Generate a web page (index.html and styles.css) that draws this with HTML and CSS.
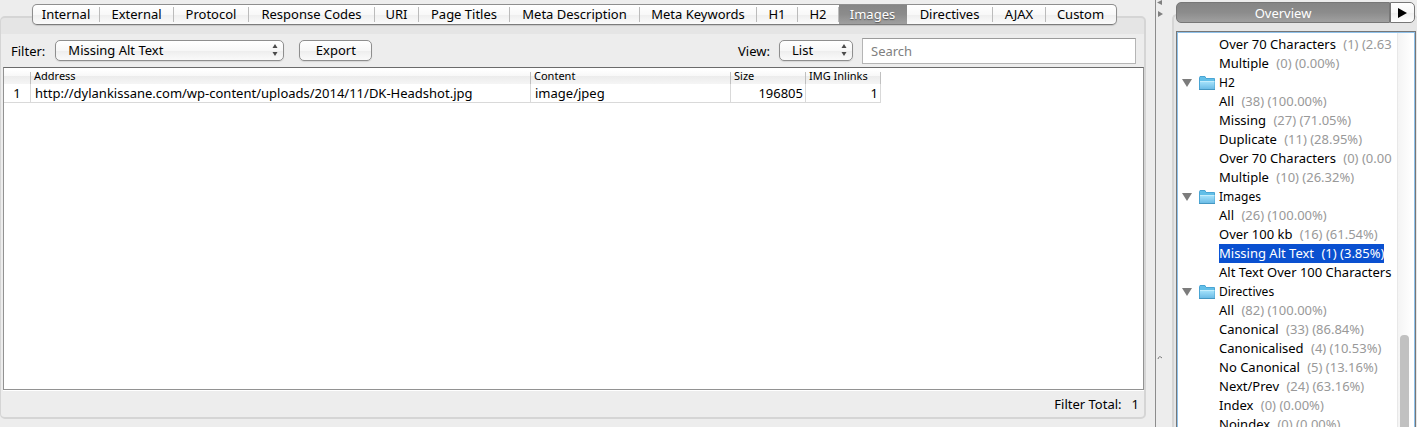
FILE: index.html
```html
<!DOCTYPE html>
<html lang="en">
  <head>
    <meta charset="UTF-8" />
    <meta name="viewport" content="width=device-width, initial-scale=1" />
    <title>Images</title>
    <link rel="stylesheet" href="styles.css">
  </head>
  <body>
    <svg class="sprite" width="0" height="0">
      <linearGradient id="folder-fill" x1="0" y1="0" x2="0" y2="1">
        <stop offset="0" stop-color="#a5e2fb" />
        <stop offset="1" stop-color="#6cbce6" />
      </linearGradient>
      <symbol id="folder" viewBox="0 0 16 14">
        <path d="M.5 13V1.5L1 .5h5l1 2h8.500V13z" fill="#62bfe8" stroke="#4aa5d4" />
        <path d="M1 5.500h14.500V13H1z" fill="url(#folder-fill)" />
        <path d="M1 5.500h14.500" stroke="#c4edfc" />
        <path d="M0 13.500h16" stroke="#4597c2" />
      </symbol>
      <symbol id="arrows" viewBox="0 0 6 12">
        <path d="M3 0l2.500 4h-5zM3 12l2.500-4h-5z" fill="#4a4a4a" />
      </symbol>
    </svg>

    <main class="main">
      <nav class="tabs">
        <button>Internal</button>
        <button>External</button>
        <button>Protocol</button>
        <button>Response Codes</button>
        <button>URI</button>
        <button>Page Titles</button>
        <button>Meta Description</button>
        <button>Meta Keywords</button>
        <button>H1</button>
        <button>H2</button>
        <button class="active">Images</button>
        <button>Directives</button>
        <button>AJAX</button>
        <button>Custom</button>
      </nav>
      <section class="panel">
        <div class="toolbar">
          <label for="filter">Filter:</label>
          <div class="select filter-select">
            <select id="filter">
              <option>Missing Alt Text</option>
              <option>Over 100 kb</option>
              <option>All</option>
            </select>
            <svg width="6" height="12"><use href="#arrows" /></svg>
          </div>
          <button class="export-btn">Export</button>
          <label class="view-label" for="view">View:</label>
          <div class="select view-select">
            <select id="view">
              <option>List</option>
              <option>Tree</option>
            </select>
            <svg width="6" height="12"><use href="#arrows" /></svg>
          </div>
          <input class="search" type="text" placeholder="Search" aria-label="Search" />
        </div>
        <div class="results">
          <table>
            <colgroup>
              <col class="col-row" />
              <col class="col-address" />
              <col class="col-content" />
              <col class="col-number" />
              <col class="col-number" />
            </colgroup>
            <thead>
              <tr>
                <th></th>
                <th>Address</th>
                <th>Content</th>
                <th>Size</th>
                <th>IMG Inlinks</th>
              </tr>
            </thead>
            <tbody>
              <tr>
                <td class="row-number">1</td>
                <td>http://dylankissane.com/wp-content/uploads/2014/11/DK-Headshot.jpg</td>
                <td>image/jpeg</td>
                <td class="number">196805</td>
                <td class="number">1</td>
              </tr>
            </tbody>
          </table>
        </div>
        <div class="total"><span>Filter Total:</span><span>1</span></div>
      </section>
    </main>

    <div class="splitter">
      <svg width="6" height="18" viewBox="0 0 6 18">
        <path d="M5 0v5L0 2.500zM1 11v6l5-3z" fill="#808080" />
      </svg>
      <svg class="grip" width="6" height="6" viewBox="0 0 6 6">
        <path d="M1 4q1-4 4-1" fill="none" stroke="#777" />
      </svg>
    </div>

    <aside class="side">
      <div class="side-tabs">
        <button class="overview">Overview</button>
        <button class="next" aria-label="Next tab">
          <svg width="10" height="10" viewBox="0 0 10 10"><path d="M0 0l9 5-9 5z" /></svg>
        </button>
      </div>
      <div class="side-panel">
        <div class="tree">
          <ul>
            <li>Over 70 Characters <span>(1) (2.63</span></li>
            <li>Multiple <span>(0) (0.00%)</span></li>
            <li class="folder"><i></i><svg width="16" height="14"><use href="#folder" /></svg>H2</li>
            <li>All <span>(38) (100.00%)</span></li>
            <li>Missing <span>(27) (71.05%)</span></li>
            <li>Duplicate <span>(11) (28.95%)</span></li>
            <li>Over 70 Characters <span>(0) (0.00</span></li>
            <li>Multiple <span>(10) (26.32%)</span></li>
            <li class="folder"><i></i><svg width="16" height="14"><use href="#folder" /></svg>Images</li>
            <li>All <span>(26) (100.00%)</span></li>
            <li>Over 100 kb <span>(16) (61.54%)</span></li>
            <li class="selected"><b>Missing Alt Text <span>(1) (3.85%)</span></b></li>
            <li>Alt Text Over 100 Characters</li>
            <li class="folder"><i></i><svg width="16" height="14"><use href="#folder" /></svg>Directives</li>
            <li>All <span>(82) (100.00%)</span></li>
            <li>Canonical <span>(33) (86.84%)</span></li>
            <li>Canonicalised <span>(4) (10.53%)</span></li>
            <li>No Canonical <span>(5) (13.16%)</span></li>
            <li>Next/Prev <span>(24) (63.16%)</span></li>
            <li>Index <span>(0) (0.00%)</span></li>
            <li>Noindex <span>(0) (0.00%)</span></li>
          </ul>
          <div class="scrollbar"><div class="thumb"></div></div>
        </div>
      </div>
    </aside>
  </body>
</html>
```
FILE: styles.css
```css
/* Base */
* {
  box-sizing: border-box;
}
body {
  margin: 0;
  height: 100vh;
  display: flex;
  overflow: hidden;
  background-color: #ededed;
  color: #000;
  font-family: "Lucida Grande", "Noto Sans", sans-serif;
  font-size: 13px;
}
button,
select,
input {
  font: inherit;
  color: inherit;
  margin: 0;
  padding: 0;
}
.sprite {
  position: absolute;
}

/* Main area */
.main {
  flex: 1;
  min-width: 0;
  display: flex;
  flex-direction: column;
  padding: 4px 9px 8px 0;
}

/* Tabs */
.tabs {
  align-self: center;
  display: grid;
  grid-template-columns: 67px 74px 75px 126px 44px 91px 130px 117px 41px 41px 68px 86px 53px 70px;
  height: 21px;
  margin-left: 2px;
  border: 1px solid #8e8e8e;
  border-bottom-color: #7c7c7c;
  border-radius: 5px;
  background: linear-gradient(#fff, #f8f8f8 50%, #eee 51%, #fbfbfb);
  box-shadow: 0 1px 1px #c8c8c8;
  z-index: 1;
}
.tabs button {
  height: 19px;
  line-height: 19px;
  border: none;
  background: linear-gradient(#bbb, #bbb) right center / 1px 15px no-repeat;
  white-space: nowrap;
}
.tabs button:last-child {
  background: none;
}
.tabs .active {
  background: linear-gradient(#858585, #8c8c8c 50%, #a0a0a0);
  color: #fff;
  text-shadow: 0 1px 1px #555;
}

/* Panel */
.panel {
  flex: 1;
  min-height: 0;
  display: flex;
  flex-direction: column;
  margin-top: -9px;
  padding: 16px 0 0 2px;
  border: 2px solid #d5d5d5;
  border-left-width: 1px;
  border-radius: 5px;
  background: linear-gradient(#e5e5e5 16px, #ededed 16px);
}
.toolbar {
  display: flex;
  align-items: center;
  height: 33px;
  padding: 0 8px;
}
.select {
  position: relative;
  height: 21px;
}
.select select {
  width: 100%;
  height: 21px;
  padding-left: 12px;
  line-height: 19px;
  appearance: none;
}
.select svg {
  position: absolute;
  right: 6px;
  top: 4px;
  pointer-events: none;
}
.filter-select {
  width: 229px;
  margin-left: 10px;
}
.select select,
.export-btn {
  border: 1px solid #8e8e8e;
  border-radius: 5px;
  background: linear-gradient(#fff, #f7f7f7 50%, #ededed 51%, #fafafa);
  box-shadow: 0 1px 1px #d5d5d5;
}
.export-btn {
  width: 73px;
  height: 21px;
  margin-left: 15px;
  line-height: 19px;
}
.view-label {
  margin-left: auto;
}
.view-select {
  width: 74px;
  margin: 0 9px 0 9px;
}
.search {
  width: 274px;
  height: 26px;
  padding: 0 8px;
  border: 1px solid #b5b5b5;
  border-top-color: #9b9b9b;
  background-color: #fff;
}
.search::placeholder {
  color: #808080;
}

/* Results table */
.results {
  flex: 1;
  min-height: 0;
  border: 1px solid #929292;
  border-top-color: #6b6b6b;
  background-color: #fff;
  box-shadow: 0 1px 0 #fff;
}
table {
  width: 877px;
  table-layout: fixed;
  border-collapse: separate;
  border-spacing: 0;
}
.col-row {
  width: 27px;
}
.col-address {
  width: 500px;
}
.col-content {
  width: 200px;
}
.col-number {
  width: 75px;
}
th {
  height: 16px;
  padding: 0 3px;
  font-size: 11px;
  font-weight: normal;
  line-height: 16px;
  text-align: left;
  background: linear-gradient(#c0c0c0, #c0c0c0) right bottom / 1px 12px no-repeat,
    linear-gradient(#fff 2px, #f8f8f8 50%, #ececec 51%, #f5f5f5);
}
td {
  height: 19px;
  padding: 0 4px;
  line-height: 18px;
  border-right: 1px solid #d9d9d9;
  border-bottom: 1px solid #d9d9d9;
}
.row-number {
  text-align: center;
}
.number {
  padding-right: 2px;
  text-align: right;
}
.total {
  display: flex;
  justify-content: flex-end;
  gap: 10px;
  height: 27px;
  padding-right: 5px;
  line-height: 28px;
}

/* Splitter */
.splitter {
  width: 17px;
  display: flex;
  flex-direction: column;
  padding-left: 1px;
  border-left: 1px solid #8c8c8c;
}
.grip {
  margin-top: 337px;
}

/* Overview */
.side {
  width: 245px;
  display: flex;
  flex-direction: column;
  padding-top: 2px;
}
.side-tabs {
  display: flex;
  height: 21px;
  margin: 0 2px 0 4px;
  z-index: 1;
}
.side-tabs button {
  border: 1px solid #777;
}
.overview {
  flex: 1;
  border-radius: 5px 0 0 5px;
  background: linear-gradient(#858585, #8c8c8c 50%, #a0a0a0);
}
.side-tabs .overview {
  color: #fff;
  line-height: 18px;
}
.next {
  width: 25px;
  display: flex;
  align-items: center;
  justify-content: center;
  border-radius: 0 5px 5px 0;
  background: linear-gradient(#fff, #f7f7f7 50%, #eee 51%, #fff);
}
.side-panel {
  flex: 1;
  min-height: 0;
  margin-top: -9px;
  padding: 15px 0 0 2px;
  border: 2px solid #d5d5d5;
  border-width: 2px 0 0 2px;
  border-radius: 5px 5px 0 0;
  background-color: #e6e6e6;
}
.tree {
  height: 100%;
  display: flex;
  margin-right: 1px;
  border: 1px solid #777;
  border-bottom: none;
  background-color: #fff;
  overflow: hidden;
}
ul {
  flex: 1;
  min-width: 0;
  margin: 0;
  padding: 2px 0 0 1px;
  border: 1px solid #8fc1ea;
  border-width: 1px 0 0 1px;
  list-style: none;
  overflow: hidden;
}
li {
  height: 19px;
  padding-left: 40px;
  line-height: 19px;
  white-space: nowrap;
}
li span {
  margin-left: 4px;
  color: #999;
}
.folder {
  display: flex;
  align-items: center;
  padding-left: 3px;
  font-size: 12px;
}
.folder i {
  border: 5px solid transparent;
  border-top: 8px solid #7c7c7c;
  border-bottom: none;
}
.folder svg {
  margin: 0 4px 0 7px;
}
.selected b {
  display: inline-block;
  background-color: #0a50d0;
  font-weight: normal;
}
.selected b,
.selected span {
  color: #fff;
}
.scrollbar {
  width: 18px;
  padding: 302px 5px 0 3px;
  border: 1px solid #8fc1ea;
  border-width: 1px 1px 0 0;
  background: linear-gradient(to right, #e8e8e8 1px, #f4f4f4 1px, #fff 15px);
}
.thumb {
  height: 120px;
  border-radius: 4px 4px 0 0;
  background-color: #c1c1c1;
}
```
